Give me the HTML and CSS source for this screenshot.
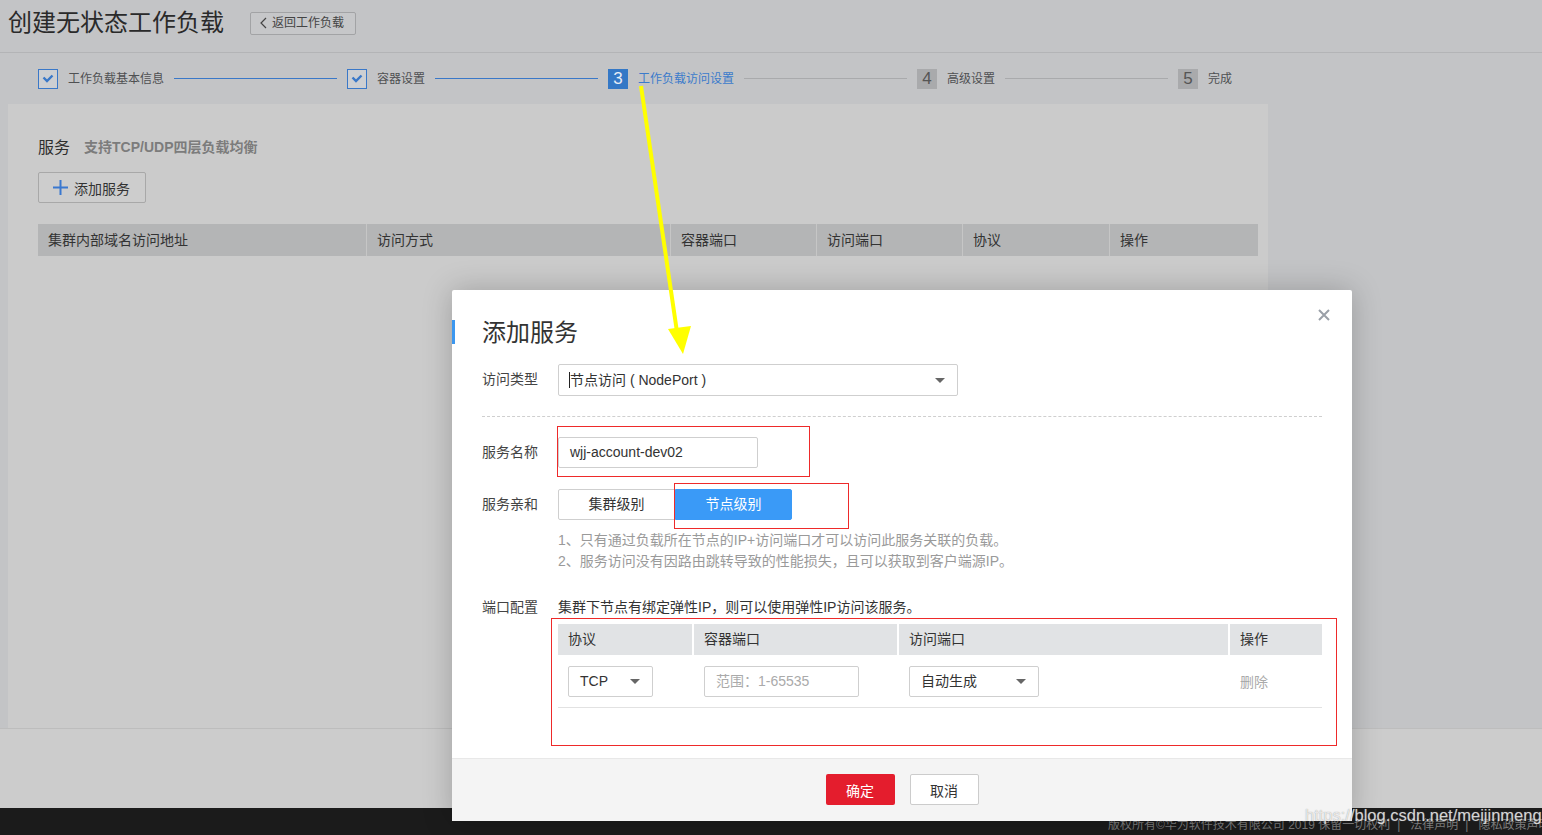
FILE: index.html
```html
<!DOCTYPE html>
<html lang="zh-CN">
<head>
<meta charset="utf-8">
<title>创建无状态工作负载</title>
<link rel="stylesheet" href="styles.css">
</head>
<body>
<div class="page">
  <header class="top">
    <h1 class="title">创建无状态工作负载</h1>
    <button class="back"><svg class="chev" width="7" height="12" viewBox="0 0 7 12"><polyline points="6,1 1,6 6,11" fill="none" stroke="#444" stroke-width="1.2"/></svg>返回工作负载</button>
  </header>
  <nav class="steps">
    <span class="box"><svg width="12" height="9" viewBox="0 0 12 9"><polyline points="1.5,3.5 5,7 10.5,1.5" fill="none" stroke="#3a78c8" stroke-width="2.4"/></svg></span>
    <span class="label">工作负载基本信息</span>
    <span class="line blue"></span>
    <span class="box"><svg width="12" height="9" viewBox="0 0 12 9"><polyline points="1.5,3.5 5,7 10.5,1.5" fill="none" stroke="#3a78c8" stroke-width="2.4"/></svg></span>
    <span class="label">容器设置</span>
    <span class="line blue"></span>
    <span class="num active">3</span>
    <span class="label active">工作负载访问设置</span>
    <span class="line"></span>
    <span class="num">4</span>
    <span class="label">高级设置</span>
    <span class="line"></span>
    <span class="num">5</span>
    <span class="label">完成</span>
  </nav>
  <main class="content">
    <section class="card">
      <div class="card-head"><span class="card-title">服务</span><span class="card-sub">支持TCP/UDP四层负载均衡</span></div>
      <button class="add-btn"><svg width="15" height="15" viewBox="0 0 15 15"><path d="M7.5 0v15M0 7.5h15" stroke="#3a78d0" stroke-width="2"/></svg>添加服务</button>
      <div class="bg-table">
        <div class="bg-cell">集群内部域名访问地址</div>
        <div class="bg-cell">访问方式</div>
        <div class="bg-cell">容器端口</div>
        <div class="bg-cell">访问端口</div>
        <div class="bg-cell">协议</div>
        <div class="bg-cell">操作</div>
      </div>
    </section>
  </main>
  <div class="bottom-bar"></div>
  <footer class="footer">版权所有©华为软件技术有限公司 2019 保留一切权利<span class="sep">|</span>法律声明<span class="sep">|</span>隐私政策声明</footer>
</div>

<div class="modal">
  <div class="modal-body">
    <h2 class="modal-title">添加服务</h2>
    <svg class="close" width="12" height="12" viewBox="0 0 12 12"><path d="M1 1L11 11M11 1L1 11" stroke="#9aa0a8" stroke-width="2"/></svg>

    <div class="form-row r1">
      <div class="f-label">访问类型</div>
      <div class="select wide"><span class="caret-line"></span>节点访问 ( NodePort )<span class="tri"></span></div>
    </div>
    <div class="divider"></div>
    <div class="form-row r2">
      <div class="f-label">服务名称</div>
      <div class="input name">wjj-account-dev02</div>
    </div>
    <div class="form-row r3">
      <div class="f-label">服务亲和</div>
      <div class="seg">
        <span class="seg-btn">集群级别</span>
        <span class="seg-btn on">节点级别</span>
      </div>
    </div>
    <div class="hints">
      <div>1、只有通过负载所在节点的IP+访问端口才可以访问此服务关联的负载。</div>
      <div>2、服务访问没有因路由跳转导致的性能损失，且可以获取到客户端源IP。</div>
    </div>
    <div class="form-row r4">
      <div class="f-label">端口配置</div>
      <div class="port-box">
        <div class="note">集群下节点有绑定弹性IP，则可以使用弹性IP访问该服务。</div>
        <div class="ptable">
          <div class="p-head">
            <div class="ph">协议</div>
            <div class="ph">容器端口</div>
            <div class="ph">访问端口</div>
            <div class="ph">操作</div>
          </div>
          <div class="p-row">
            <div class="pc"><div class="select tcp">TCP<span class="tri"></span></div></div>
            <div class="pc"><div class="input port">范围：1-65535</div></div>
            <div class="pc"><div class="select auto">自动生成<span class="tri"></span></div></div>
            <div class="pc del">删除</div>
          </div>
        </div>
      </div>
    </div>
  </div>
  <div class="modal-foot">
    <button class="btn ok">确定</button>
    <button class="btn cancel">取消</button>
  </div>
</div>

<div class="mark m1"></div>
<div class="mark m2"></div>
<div class="mark m3"></div>

<svg class="arrow" width="1542" height="835" viewBox="0 0 1542 835">
  <line x1="641" y1="86" x2="677" y2="332" stroke="#ffff00" stroke-width="4"/>
  <polygon points="668,329 691,326 683,354" fill="#ffff00"/>
</svg>

<div class="watermark">https://blog.csdn.net/meijinmeng</div>
</body>
</html>
```

FILE: styles.css
```css
* { box-sizing: border-box; }

html, body {
  margin: 0;
  padding: 0;
}

body {
  width: 1542px;
  height: 835px;
  overflow: hidden;
  position: relative;
  background: #c3c4c6;
  font-family: "Liberation Sans", "Noto Sans CJK SC", sans-serif;
  color: #333;
}

button {
  font-family: inherit;
  cursor: pointer;
}

/* ---------- page header ---------- */
.top {
  height: 53px;
  border-bottom: 1px solid #b3b4b6;
  display: flex;
  align-items: center;
  padding-left: 8px;
  padding-bottom: 6px;
}

.title {
  margin: 0;
  font-size: 24px;
  font-weight: normal;
  line-height: 30px;
  color: #2a2a2a;
}

.back {
  margin-left: 26px;
  height: 23px;
  width: 106px;
  border: 1px solid #a2a3a5;
  border-radius: 2px;
  background: #c6c7c9;
  font-size: 12px;
  color: #444;
  display: flex;
  align-items: center;
  padding: 0 0 0 9px;
  line-height: 20px;
}

.chev { margin-right: 5px; }

/* ---------- steps ---------- */
.steps {
  height: 51px;
  display: flex;
  align-items: center;
  padding-left: 38px;
}

.box {
  width: 20px;
  height: 20px;
  border: 1px solid #3a78c8;
  background: #cdcfd2;
  display: flex;
  align-items: center;
  justify-content: center;
}

.num {
  width: 20px;
  height: 20px;
  background: #a9aaac;
  color: #555;
  font-size: 17px;
  line-height: 20px;
  text-align: center;
}

.num.active {
  background: #3478c6;
  color: #e6edf6;
}

.label {
  margin-left: 10px;
  font-size: 12px;
  line-height: 16px;
  color: #4f5052;
}

.label.active { color: #3b7bcb; }

.line {
  width: 163px;
  height: 1px;
  margin: 0 10px;
  background: #a9aaac;
}

.line.blue { background: #3a78c8; }

/* ---------- card ---------- */
.content {
  height: 624px;
}

.card {
  margin-left: 8px;
  width: 1260px;
  height: 624px;
  background: #cbcbcb;
  padding: 32px 10px 0 30px;
}

.card-head {
  display: flex;
  align-items: center;
  height: 20px;
}

.card-title {
  font-size: 16px;
  color: #2e2e2e;
}

.card-sub {
  margin-left: 14px;
  font-size: 14px;
  font-weight: bold;
  color: #7c7c7c;
}

.add-btn {
  margin-top: 16px;
  width: 108px;
  height: 31px;
  border: 1px solid #a8a8a8;
  border-radius: 2px;
  background: #cdcdcd;
  font-size: 14px;
  color: #333;
  display: flex;
  align-items: center;
  padding: 0 0 0 14px;
}

.add-btn svg { margin-right: 6px; }

.bg-table {
  margin-top: 21px;
  display: grid;
  grid-template-columns: 328px 303px 145px 145px 146px 1fr;
  column-gap: 1px;
  background: #c6c6c6;
  height: 32px;
}

.bg-cell {
  background: #b4b5b6;
  font-size: 14px;
  line-height: 32px;
  padding-left: 10px;
  color: #333;
}

/* ---------- bottom ---------- */
.bottom-bar {
  height: 80px;
  background: #cccccc;
  border-top: 1px solid #bdbdbd;
}

.footer {
  height: 27px;
  background: #1b1b1b;
  padding-left: 1108px;
  padding-top: 9px;
  font-size: 12px;
  line-height: 17px;
  color: #7a7a7a;
  white-space: nowrap;
  overflow: hidden;
}

.sep {
  margin: 0 10px 0 7px;
}

/* ---------- modal ---------- */
.modal {
  position: absolute;
  left: 452px;
  top: 290px;
  width: 900px;
  height: 531px;
  background: #fff;
  border-radius: 2px;
  box-shadow: 0 0 30px rgba(0, 0, 0, 0.22);
  display: flex;
  flex-direction: column;
  z-index: 5;
}

.modal-body {
  position: relative;
  flex: 1;
  padding: 30px 30px 0;
}

.modal-title {
  position: relative;
  margin: 0;
  font-size: 24px;
  line-height: 26px;
  font-weight: normal;
  color: #333;
}

.modal-title::before {
  content: "";
  position: absolute;
  left: -30px;
  top: 0;
  width: 3px;
  height: 24px;
  background: #3c97ef;
}

.close {
  position: absolute;
  top: 19px;
  right: 22px;
}

.form-row {
  display: flex;
  align-items: center;
}

.f-label {
  width: 76px;
  flex: none;
  font-size: 14px;
  line-height: 18px;
  color: #444;
  padding-bottom: 2px;
}

.r1 { margin-top: 18px; }
.r2 { margin-top: 20px; }
.r3 { margin-top: 21px; }
.r4 { margin-top: 25px; align-items: flex-start; }
.r4 .f-label { line-height: 20px; padding-bottom: 0; }

.select, .input {
  position: relative;
  height: 31px;
  border: 1px solid #cfcfcf;
  border-radius: 2px;
  font-size: 14px;
  line-height: 29px;
  padding-left: 11px;
  color: #333;
  background: #fff;
  white-space: nowrap;
}

.select.wide {
  width: 400px;
  height: 32px;
  line-height: 30px;
}

.caret-line {
  display: inline-block;
  width: 1px;
  height: 16px;
  background: #222;
  vertical-align: -3px;
  margin-left: -1px;
}

.tri {
  position: absolute;
  right: 12px;
  top: 50%;
  margin-top: -2px;
  width: 0;
  height: 0;
  border-left: 5px solid transparent;
  border-right: 5px solid transparent;
  border-top: 5px solid #666;
}

.divider {
  margin-top: 20px;
  border-top: 1px dashed #cfcfcf;
}

.input.name { width: 200px; }

.seg {
  display: flex;
  height: 31px;
}

.seg-btn {
  width: 117px;
  height: 31px;
  border: 1px solid #cfcfcf;
  font-size: 14px;
  line-height: 29px;
  text-align: center;
  color: #333;
  background: #fff;
}

.seg-btn:first-child { border-radius: 2px 0 0 2px; }

.seg-btn.on {
  width: 117px;
  background: #3a9af7;
  border-color: #3a9af7;
  color: #fff;
  border-radius: 0 2px 2px 0;
}

.hints {
  margin-top: 10px;
  margin-left: 76px;
  font-size: 14px;
  line-height: 21px;
  color: #9a9a9a;
}

.port-box {
  flex: 1;
}

.note {
  font-size: 14px;
  line-height: 20px;
  color: #333;
}

.ptable {
  margin-top: 7px;
}

.p-head, .p-row {
  display: grid;
  grid-template-columns: 134px 203px 329px 1fr;
  column-gap: 2px;
}

.ph {
  height: 31px;
  background: #e1e3e5;
  font-size: 14px;
  line-height: 31px;
  padding-left: 10px;
  color: #333;
}

.p-row {
  height: 53px;
  border-bottom: 1px solid #e2e2e2;
  align-items: center;
}

.pc {
  padding-left: 10px;
}

.select.tcp { width: 85px; }
.input.port { width: 155px; color: #aaa; }
.select.auto { width: 130px; }

.pc.del {
  font-size: 14px;
  color: #aaa;
}

.modal-foot {
  height: 63px;
  background: #f4f4f4;
  border-top: 1px solid #e8e8e8;
  display: flex;
  justify-content: center;
  gap: 15px;
  padding-top: 15px;
}

.btn {
  width: 69px;
  height: 31px;
  font-size: 14px;
  border-radius: 2px;
}

.btn.ok {
  background: #e41d2d;
  color: #fff;
  border: none;
}

.btn.cancel {
  background: #fff;
  border: 1px solid #cccccc;
  color: #333;
}

/* ---------- annotation overlays ---------- */
.mark {
  position: absolute;
  border: 1px solid #ee2a2a;
  z-index: 8;
  pointer-events: none;
}

.m1 { left: 557px; top: 426px; width: 253px; height: 51px; }
.m2 { left: 674px; top: 483px; width: 175px; height: 46px; }
.m3 { left: 551px; top: 618px; width: 786px; height: 128px; }

.arrow {
  position: absolute;
  left: 0;
  top: 0;
  z-index: 9;
  pointer-events: none;
}

.watermark {
  position: absolute;
  left: 1305px;
  top: 805px;
  z-index: 10;
  font-size: 16.5px;
  line-height: 20px;
  color: rgba(255, 255, 255, 0.75);
  text-shadow: 0 0 1px rgba(120, 120, 120, 0.8);
  white-space: nowrap;
}
```
